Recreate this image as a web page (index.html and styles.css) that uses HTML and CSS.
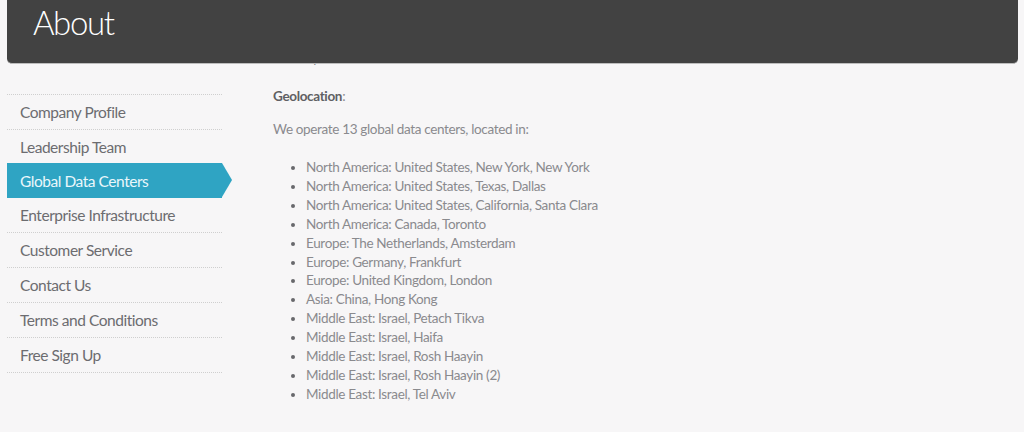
FILE: index.html
```html
<!DOCTYPE html>
<html lang="en">
<head>
  <meta charset="UTF-8">
  <title>About</title>
  <link rel="stylesheet" href="styles.css">
</head>
<body>
  <div class="page-head">
    <h1>About</h1>
  </div>
  <div class="page-body">
    <ul class="side-nav">
      <li><a href="#">Company Profile</a></li>
      <li><a href="#">Leadership Team</a></li>
      <li class="active"><a href="#">Global Data Centers</a></li>
      <li><a href="#">Enterprise Infrastructure</a></li>
      <li><a href="#">Customer Service</a></li>
      <li><a href="#">Contact Us</a></li>
      <li><a href="#">Terms and Conditions</a></li>
      <li><a href="#">Free Sign Up</a></li>
    </ul>
    <div class="content">
      <p class="under-head">Our operations</p>
      <p class="geo"><strong>Geolocation</strong>:</p>
      <p class="intro">We operate 13 global data centers, located in:</p>
      <ul class="locations">
        <li>North America: United States, New York, New York</li>
        <li>North America: United States, Texas, Dallas</li>
        <li>North America: United States, California, Santa Clara</li>
        <li>North America: Canada, Toronto</li>
        <li>Europe: The Netherlands, Amsterdam</li>
        <li>Europe: Germany, Frankfurt</li>
        <li>Europe: United Kingdom, London</li>
        <li>Asia: China, Hong Kong</li>
        <li>Middle East: Israel, Petach Tikva</li>
        <li>Middle East: Israel, Haifa</li>
        <li>Middle East: Israel, Rosh Haayin</li>
        <li>Middle East: Israel, Rosh Haayin (2)</li>
        <li>Middle East: Israel, Tel Aviv</li>
      </ul>
    </div>
  </div>
</body>
</html>
```

FILE: styles.css
```css
html, body {
  height: 100%;
}
body {
  font-family: Lato, "Open Sans", sans-serif;
  background-color: #f7f6f7;
  color: #8a8a8e;
  margin: 0;
  padding: 0 6px 0 7px;
  overflow: hidden;
}
.page-head {
  position: relative;
  z-index: 2;
  height: 64px;
  background-color: #424242;
  border-bottom: 1px solid #bdbdbd;
  border-radius: 0 0 5px 5px;
  box-sizing: border-box;
  padding-left: 26px;
}
.page-head h1 {
  margin: 0;
  color: #fff;
  font-size: 33px;
  font-weight: 300;
  line-height: 44px;
  letter-spacing: -1.4px;
}
.page-body {
  display: flex;
  padding-top: 30px;
}
.side-nav {
  list-style: none;
  margin: 0;
  padding: 0;
  width: 215px;
  border-top: 1px dotted #cfcfcf;
}
.side-nav li {
  height: 34px;
  border-bottom: 1px dotted #cfcfcf;
  position: relative;
}
.side-nav a {
  display: block;
  padding: 1px 0 0 13px;
  color: #6c6c70;
  font-size: 15.5px;
  letter-spacing: -0.46px;
  line-height: 33px;
  text-decoration: none;
}
.side-nav .active {
  background-color: #2fa4c3;
  border-bottom: 0;
  height: 35px;
  margin-top: -2px;
}
.side-nav .active a {
  color: #eaf7fb;
  line-height: 35px;
}
.side-nav .active::after {
  content: "";
  position: absolute;
  left: 215px;
  top: 0;
  border-left: 10px solid #2fa4c3;
  border-top: 17.5px solid transparent;
  border-bottom: 17.5px solid transparent;
}
.content {
  margin-left: 51px;
  font-size: 13.5px;
  letter-spacing: -0.34px;
  line-height: 19px;
}
.content p {
  margin: 0;
}
.content .under-head {
  margin-top: -45px;
  height: 38px;
  text-indent: 8px;
}
.geo strong {
  color: #5f5f63;
}
.content .intro {
  margin-top: 14px;
}
.locations {
  margin: 19px 0 0;
  padding-left: 33px;
  line-height: 18.9px;
}
.locations li::marker {
  color: #68686c;
}
```
